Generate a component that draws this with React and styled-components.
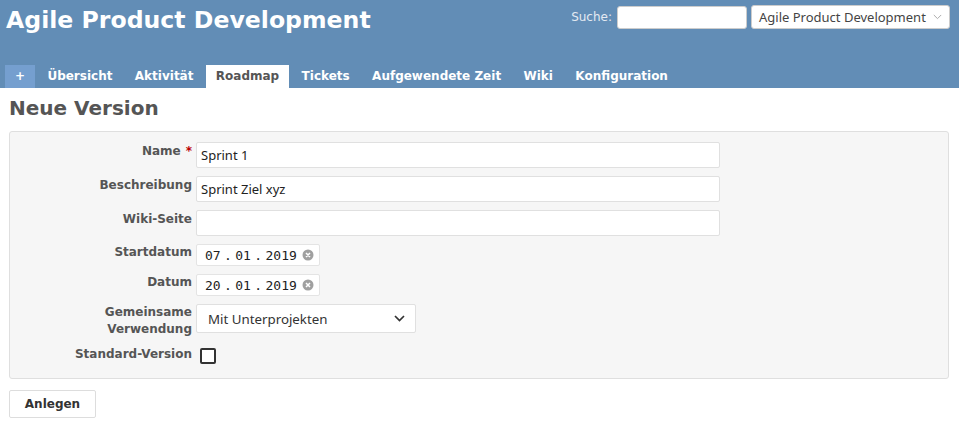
import React from 'react';
import styled, { createGlobalStyle } from 'styled-components';

const GlobalStyle = createGlobalStyle`
  html, body {
    margin: 0;
    padding: 0;
    background: #fff;
    font-family: "DejaVu Sans", Verdana, sans-serif;
    font-size: 12px;
    color: #333;
  }
`;

const Header = styled.header`
  background: #628db6;
  height: 88px;
  display: flex;
  flex-direction: column;
  justify-content: space-between;
  padding-left: 5px;
  box-sizing: border-box;
`;

const TopRow = styled.div`
  display: flex;
  justify-content: space-between;
  align-items: flex-start;
`;

const Title = styled.h1`
  margin: 5px 0 0 1px;
  color: #fff;
  font-size: 23.6px;
  font-weight: bold;
  line-height: 30px;
  white-space: nowrap;
`;

const Search = styled.div`
  display: flex;
  align-items: center;
  gap: 4px;
  padding: 5px 9px 0 0;
  color: #e4eaf2;
  font-size: 12px;
  white-space: nowrap;
`;

const SearchInput = styled.input`
  width: 130px;
  height: 23px;
  box-sizing: border-box;
  border: 1px solid #ccc;
  border-radius: 3px;
  background: #fff;
  margin-left: 1px;
`;

const ProjectSelect = styled.div`
  width: 199px;
  height: 24px;
  box-sizing: border-box;
  border: 1px solid #ccc;
  border-radius: 3px;
  background: #fff;
  display: flex;
  align-items: center;
  justify-content: space-between;
  padding: 0 7px 0 7px;
  color: #444;
  font-family: "Noto Sans", sans-serif;
  font-size: 13px;
  white-space: nowrap;
`;

const Tabs = styled.nav`
  display: flex;
  gap: 2.4px;
`;

const Tab = styled.a`
  display: block;
  padding: 4px 10px;
  line-height: 15px;
  font-size: 12px;
  font-weight: bold;
  white-space: nowrap;
  color: ${p => (p.$selected ? '#555' : '#fff')};
  background: ${p => (p.$selected ? '#fff' : p.$plus ? '#759fcf' : 'transparent')};
  ${p => p.$plus && 'width: 30px; box-sizing: border-box; text-align: center; padding: 4px 0;'}
`;

const Content = styled.main`
  padding: 9px 10px 0 9px;
`;

const PageTitle = styled.h2`
  margin: 0 0 12px 0;
  font-size: 20px;
  line-height: 22px;
  color: #555;
  font-weight: bold;
`;

const Box = styled.div`
  background: #f6f6f6;
  border: 1px solid #dfdfdf;
  border-radius: 3px;
  padding: 10px 0 14px 0;
  display: flex;
  flex-direction: column;
  gap: 8px;
`;

const Row = styled.div`
  display: grid;
  grid-template-columns: 182px 1fr;
  column-gap: 4px;
  align-items: start;
`;

const Label = styled.label`
  text-align: right;
  font-weight: bold;
  color: #555;
  font-size: 12px;
  line-height: 17px;
  white-space: nowrap;
  padding-top: ${p => p.$top || 0}px;
`;

const Required = styled.span`
  color: #bb0000;
  margin-left: 5px;
`;

const TextField = styled.div`
  width: 524px;
  height: 26px;
  box-sizing: border-box;
  border: 1px solid #e0e0e0;
  border-radius: 2px;
  background: #fff;
  padding: 0 4px;
  display: flex;
  align-items: center;
  font-family: "Noto Sans", sans-serif;
  font-size: 13px;
  color: #222;
`;

const DateField = styled.div`
  width: 124px;
  height: 22px;
  box-sizing: border-box;
  border: 1px solid #e4e4e4;
  border-radius: 2px;
  background: #fff;
  display: flex;
  align-items: center;
  padding: 0 0 0 8px;
  font-family: "DejaVu Sans Mono", monospace;
  font-size: 13px;
  color: #222;
  white-space: nowrap;
`;

const DatePart = styled.span``;

const DateSep = styled.span`
  margin: 0 3.4px;
`;

const ClearIcon = styled.svg`
  margin-left: 5px;
  flex: none;
`;

const SelectField = styled.div`
  width: 220px;
  height: 29px;
  box-sizing: border-box;
  border: 1px solid #e0e0e0;
  border-radius: 2px;
  background: #fff;
  display: flex;
  align-items: center;
  justify-content: space-between;
  padding: 0 10px 0 11px;
  font-family: "Noto Sans", sans-serif;
  font-size: 13.3px;
  color: #333;
  white-space: nowrap;
`;

const Checkbox = styled.span`
  display: block;
  width: 16px;
  height: 16px;
  box-sizing: border-box;
  border: 2px solid #333;
  border-radius: 2px;
  background: #fff;
  margin: 2px 0 0 4px;
`;

const Button = styled.button`
  margin-top: 11px;
  width: 87px;
  height: 28px;
  background: #fff;
  border: 1px solid #ddd;
  border-radius: 2px;
  font-family: "DejaVu Sans", Verdana, sans-serif;
  font-size: 12px;
  font-weight: bold;
  color: #333;
`;

const Clear = () => (
  <ClearIcon width="12" height="12" viewBox="0 0 12 12">
    <circle cx="6" cy="6" r="5.5" fill="#a0a0a0" />
    <path d="M4 4 L8 8 M8 4 L4 8" stroke="#fff" strokeWidth="1.5" />
  </ClearIcon>
);

const Chevron = ({ w = 11, h = 7, color = '#333', width = 1.7 }) => (
  <svg width={w} height={h} viewBox="0 0 11 7">
    <path d="M1 1 L5.5 5.5 L10 1" fill="none" stroke={color} strokeWidth={width} />
  </svg>
);

const DateInput = ({ d, m, y }) => (
  <DateField>
    <DatePart>{d}</DatePart>
    <DateSep>.</DateSep>
    <DatePart>{m}</DatePart>
    <DateSep>.</DateSep>
    <DatePart>{y}</DatePart>
    <Clear />
  </DateField>
);

const tabs = ['Übersicht', 'Aktivität', 'Roadmap', 'Tickets', 'Aufgewendete Zeit', 'Wiki', 'Konfiguration'];

export default function App() {
  return (
    <>
      <GlobalStyle />
      <Header>
        <TopRow>
          <Title>Agile Product Development</Title>
          <Search>
            Suche:
            <SearchInput />
            <ProjectSelect>
              Agile Product Development
              <Chevron w={9} h={6} color="#aaa" width={1.2} />
            </ProjectSelect>
          </Search>
        </TopRow>
        <Tabs>
          <Tab $plus>+</Tab>
          {tabs.map(t => (
            <Tab key={t} $selected={t === 'Roadmap'}>{t}</Tab>
          ))}
        </Tabs>
      </Header>
      <Content>
        <PageTitle>Neue Version</PageTitle>
        <Box>
          <Row>
            <Label $top={1}>Name<Required>*</Required></Label>
            <TextField>Sprint 1</TextField>
          </Row>
          <Row>
            <Label $top={1}>Beschreibung</Label>
            <TextField>Sprint Ziel xyz</TextField>
          </Row>
          <Row>
            <Label $top={1}>Wiki-Seite</Label>
            <TextField />
          </Row>
          <Row>
            <Label>Startdatum</Label>
            <DateInput d="07" m="01" y="2019" />
          </Row>
          <Row>
            <Label>Datum</Label>
            <DateInput d="20" m="01" y="2019" />
          </Row>
          <Row>
            <Label>Gemeinsame<br />Verwendung</Label>
            <SelectField>
              Mit Unterprojekten
              <Chevron />
            </SelectField>
          </Row>
          <Row>
            <Label>Standard-Version</Label>
            <Checkbox />
          </Row>
        </Box>
        <Button>Anlegen</Button>
      </Content>
    </>
  );
}
